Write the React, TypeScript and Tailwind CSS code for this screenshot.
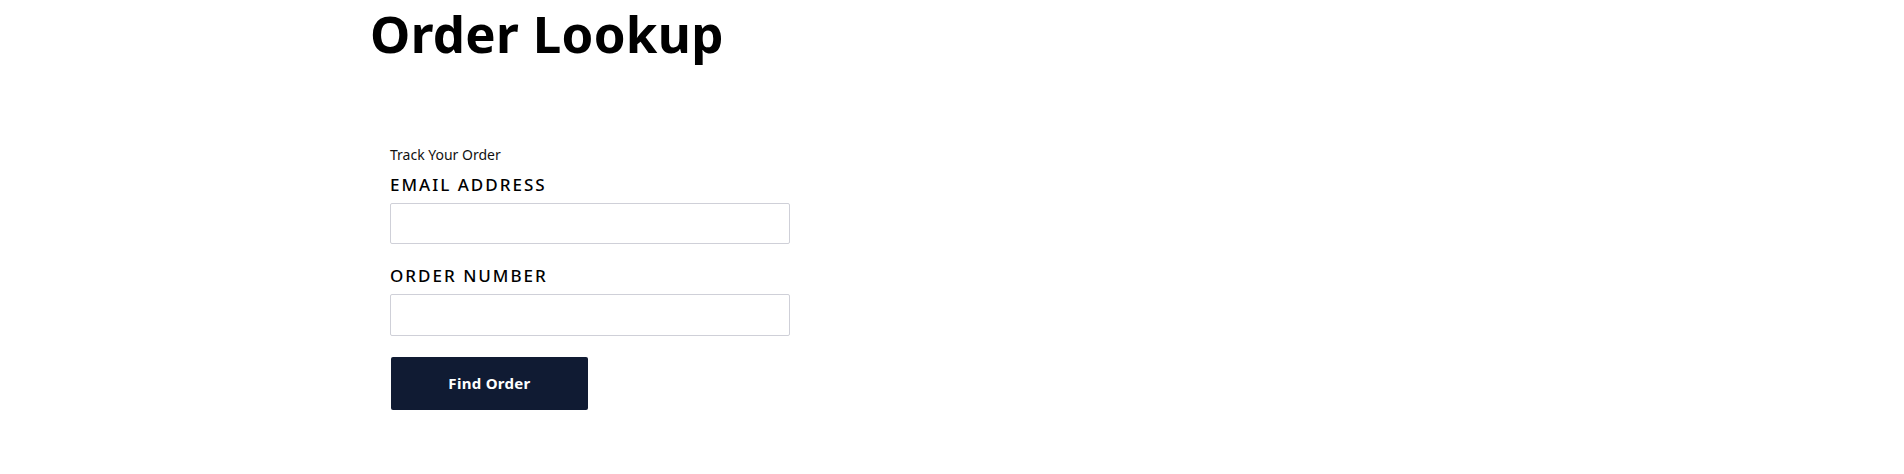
export default function App() {
  return (
    <div className="min-h-screen bg-white text-black" style={{ fontFamily: '"Noto Sans", Roboto, sans-serif' }}>
      <div className="max-w-[1160px] mx-auto">
        <h1 className="text-[51px] leading-[66px] font-bold tracking-[0.3px] -ml-[2px]">Order Lookup</h1>

        <form className="mt-[80px] pl-[18px] w-[418px]">
          <p className="text-[14px] leading-[18px] text-[#111]">Track Your Order</p>

          <label className="block mt-[11px] text-[17px] leading-[20px] font-medium tracking-[2px] uppercase">
            Email Address
          </label>
          <input
            type="email"
            className="block mt-[8px] w-[400px] h-[41px] border border-[#cfd0d8] rounded-[2px] px-3 outline-none"
          />

          <label className="block mt-[22px] text-[17px] leading-[20px] font-medium tracking-[2px] uppercase">
            Order Number
          </label>
          <input
            type="text"
            className="block mt-[8px] w-[400px] h-[42px] border border-[#cfd0d8] rounded-[2px] px-3 outline-none"
          />

          <button
            type="button"
            className="mt-[21px] ml-[1px] w-[197px] h-[53px] bg-[#101b33] rounded-[2px] text-white text-[15px] font-bold tracking-[0.3px]"
          >
            Find Order
          </button>
        </form>
      </div>
    </div>
  );
}
